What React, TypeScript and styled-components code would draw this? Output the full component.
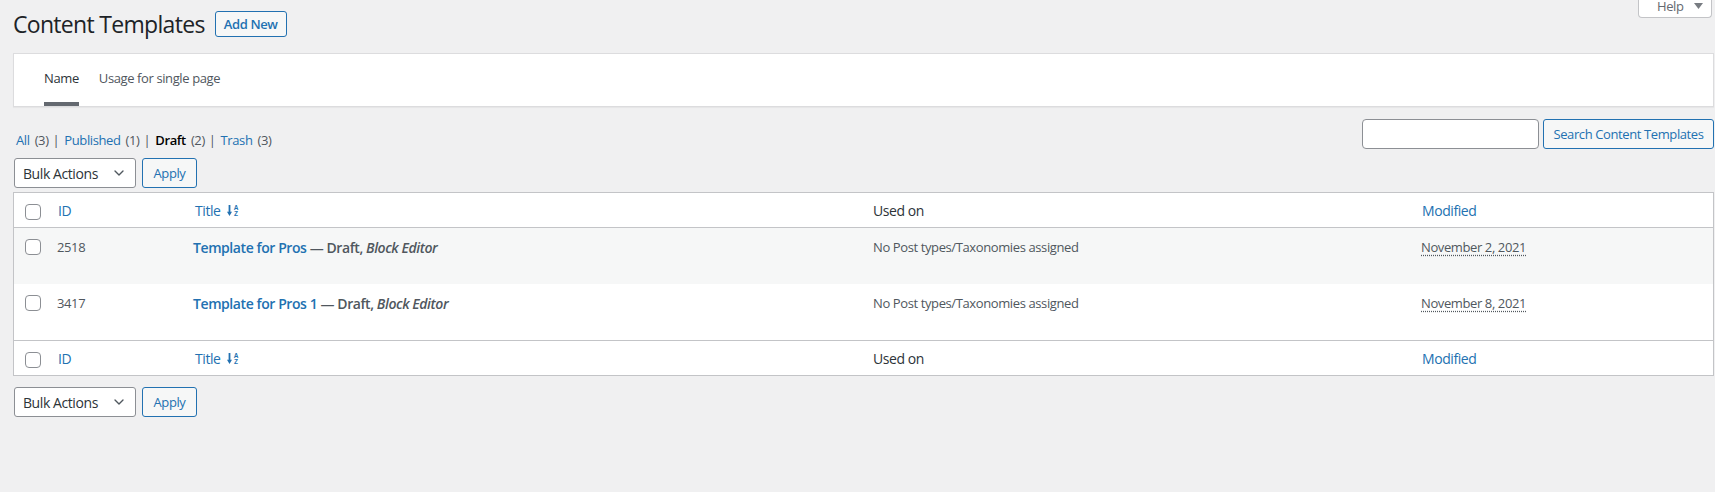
import { createGlobalStyle, styled } from 'styled-components';
import { ChevronDown } from 'lucide-react';

interface TemplateRow {
  id: number;
  title: string;
  usedOn: string;
  modified: string;
}

const rows: TemplateRow[] = [
  { id: 2518, title: 'Template for Pros', usedOn: 'No Post types/Taxonomies assigned', modified: 'November 2, 2021' },
  { id: 3417, title: 'Template for Pros 1', usedOn: 'No Post types/Taxonomies assigned', modified: 'November 8, 2021' },
];

const statuses = [
  { label: 'All', count: 3 },
  { label: 'Published', count: 1 },
  { label: 'Draft', count: 2, current: true },
  { label: 'Trash', count: 3 },
];

const GlobalStyle = createGlobalStyle`
  body {
    margin: 0;
    background: #f0f0f1;
    font-family: "Open Sans", "Noto Sans", sans-serif;
    font-size: 13px;
    color: #3c434a;
  }
  * {
    box-sizing: border-box;
    letter-spacing: -0.03em;
  }
`;

// dashicons-style "sort ascending" glyph: arrow plus a tiny A over Z
const SortIcon = () => (
  <svg width="12" height="13" viewBox="0 0 12 13" aria-hidden="true">
    <rect x="1.6" y="1" width="1.8" height="7.5" fill="currentColor" />
    <path d="M0 7.8 H5 L2.5 12 Z" fill="currentColor" />
    <text x="9" y="5.5" fontSize="6.5" fontWeight="700" textAnchor="middle" fill="currentColor" fontFamily="Liberation Sans, sans-serif">A</text>
    <text x="9" y="12.3" fontSize="6.5" fontWeight="700" textAnchor="middle" fill="currentColor" fontFamily="Liberation Sans, sans-serif">Z</text>
  </svg>
);

const HeaderCells = () => (
  <tr>
    <HeadCheck>
      <Checkbox />
    </HeadCheck>
    <HeadCell>
      <SortLink>ID</SortLink>
    </HeadCell>
    <HeadCell>
      <SortLink>
        Title <SortIcon />
      </SortLink>
    </HeadCell>
    <HeadCell>Used on</HeadCell>
    <HeadCell>
      <SortLink>Modified</SortLink>
    </HeadCell>
  </tr>
);

const BulkActions = () => (
  <BulkRow>
    <SelectBox>
      <span>Bulk Actions</span>
      <ChevronDown size={16} strokeWidth={2} color="#50575e" />
    </SelectBox>
    <ActionButton $width={55}>Apply</ActionButton>
  </BulkRow>
);

const App = () => {
  return (
    <Wrap>
      <GlobalStyle />
      <HeaderRow>
        <PageTitle>Content Templates</PageTitle>
        <ActionButton $width={72} $bold $height={26}>
          Add New
        </ActionButton>
        <HelpTab>
          Help
          <svg width="9" height="6" viewBox="0 0 9 6" aria-hidden="true">
            <path d="M0 0 H9 L4.5 6 Z" fill="#787c82" />
          </svg>
        </HelpTab>
      </HeaderRow>

      <TabsPanel>
        <Tab $active>Name</Tab>
        <Tab>Usage for single page</Tab>
      </TabsPanel>

      <TopRow>
        <StatusList>
          {statuses.map((s, i) => (
            <li key={s.label}>
              <StatusLink $current={s.current}>{s.label}</StatusLink>
              <Count>({s.count})</Count>
              {i < statuses.length - 1 && <Separator>|</Separator>}
            </li>
          ))}
        </StatusList>
        <SearchBox>
          <SearchInput type="search" />
          <ActionButton $width={171}>Search Content Templates</ActionButton>
        </SearchBox>
      </TopRow>

      <BulkActions />

      <Table>
        <colgroup>
          <col style={{ width: 33 }} />
          <col style={{ width: 137 }} />
          <col style={{ width: 679 }} />
          <col style={{ width: 548 }} />
          <col />
        </colgroup>
        <thead>
          <HeaderCells />
        </thead>
        <tbody>
          {rows.map((row, i) => (
            <BodyRow key={row.id} $striped={i % 2 === 0}>
              <RowCheck>
                <Checkbox />
              </RowCheck>
              <Cell>{row.id}</Cell>
              <TitleCell>
                <RowTitle>{row.title}</RowTitle> — Draft, <em>Block Editor</em>
              </TitleCell>
              <Cell>{row.usedOn}</Cell>
              <Cell>
                <DateText>{row.modified}</DateText>
              </Cell>
            </BodyRow>
          ))}
        </tbody>
        <Foot>
          <HeaderCells />
        </Foot>
      </Table>

      <BottomNav>
        <BulkActions />
      </BottomNav>
    </Wrap>
  );
};

const Wrap = styled.div`
  padding: 0 1px 0 13px;
`;

const HeaderRow = styled.div`
  display: flex;
  align-items: center;
  height: 48px;
`;

const PageTitle = styled.h1`
  margin: 0 10px 0 0;
  font-size: 23px;
  font-weight: 400;
  line-height: 30px;
  color: #1d2327;
`;

const ActionButton = styled.button<{ $width: number; $height?: number; $bold?: boolean }>`
  width: ${(p) => p.$width}px;
  height: ${(p) => p.$height ?? 30}px;
  padding: 0;
  border: 1px solid #2271b1;
  border-radius: 3px;
  background: #f6f7f7;
  color: #2271b1;
  font-family: inherit;
  font-size: 13px;
  font-weight: ${(p) => (p.$bold ? 600 : 400)};
  white-space: nowrap;
`;

const HelpTab = styled.div`
  align-self: flex-start;
  display: flex;
  align-items: center;
  gap: 10px;
  width: 74px;
  height: 28px;
  margin: -10px 2px 0 auto;
  padding: 5px 0 0 18px;
  border: 1px solid #c3c4c7;
  border-top: none;
  border-radius: 0 0 4px 4px;
  background: #fff;
  color: #646970;
  font-size: 13px;
`;

const TabsPanel = styled.div`
  display: flex;
  gap: 20px;
  margin-top: 5px;
  padding-left: 30px;
  background: #fff;
  border: 1px solid #dcdcde;
  box-shadow: 0 1px 1px rgba(0, 0, 0, 0.04);
`;

const Tab = styled.div<{ $active?: boolean }>`
  display: flex;
  align-items: center;
  height: 52px;
  border-bottom: 4px solid ${(p) => (p.$active ? '#646970' : 'transparent')};
  color: ${(p) => (p.$active ? '#2c3338' : '#50575e')};
  font-size: 13px;
`;

const TopRow = styled.div`
  display: flex;
  justify-content: space-between;
  align-items: flex-start;
  height: 30px;
  margin-top: 12px;
`;

const StatusList = styled.ul`
  display: flex;
  margin: 0;
  padding: 11px 0 0 3px;
  list-style: none;
  line-height: 20px;
  color: #646970;

  li {
    white-space: nowrap;
  }
`;

const StatusLink = styled.span<{ $current?: boolean }>`
  color: ${(p) => (p.$current ? '#000' : '#2271b1')};
  font-weight: ${(p) => (p.$current ? 600 : 400)};
`;

const Count = styled.span`
  margin-left: 5px;
  color: #50575e;
`;

const Separator = styled.span`
  margin: 0 5px 0 4px;
  color: #50575e;
`;

const SearchBox = styled.div`
  display: flex;
  gap: 4px;
`;

const SearchInput = styled.input`
  width: 177px;
  height: 30px;
  border: 1px solid #8c8f94;
  border-radius: 4px;
  background: #fff;
  outline: none;
`;

const BulkRow = styled.div`
  display: flex;
  gap: 6px;
  margin-top: 9px;
  padding-left: 1px;
`;

const SelectBox = styled.div`
  display: flex;
  align-items: center;
  justify-content: space-between;
  width: 122px;
  height: 30px;
  padding: 0 8px 0 8px;
  border: 1px solid #8c8f94;
  border-radius: 3px;
  background: #fff;
  color: #2c3338;
  font-size: 14px;
`;

const Table = styled.table`
  width: 100%;
  margin-top: 4px;
  border: 1px solid #c3c4c7;
  border-spacing: 0;
  background: #fff;
  table-layout: fixed;
`;

const HeadCell = styled.th`
  height: 35px;
  padding: 0 10px;
  border-bottom: 1px solid #c3c4c7;
  text-align: left;
  font-size: 14px;
  font-weight: 400;
  color: #2c3338;
  vertical-align: middle;
`;

const HeadCheck = styled(HeadCell)`
  padding: 3px 0 0 11px;
`;

const Foot = styled.tfoot`
  th {
    border-bottom: none;
    border-top: 1px solid #c3c4c7;
  }
`;

const SortLink = styled.span`
  display: inline-flex;
  align-items: center;
  gap: 6px;
  padding-left: 1px;
  color: #2271b1;
`;

const BodyRow = styled.tr<{ $striped: boolean }>`
  height: 56px;
  background: ${(p) => (p.$striped ? '#f6f7f7' : '#fff')};
`;

const Cell = styled.td`
  padding: 9px 10px 8px;
  vertical-align: top;
  font-size: 13px;
  line-height: 21px;
  color: #50575e;
`;

const RowCheck = styled(Cell)`
  padding: 11px 0 0 11px;
`;

const TitleCell = styled(Cell)`
  padding-left: 9px;
  font-size: 14px;
  font-weight: 600;
  white-space: nowrap;
`;

const RowTitle = styled.span`
  color: #2271b1;
`;

const DateText = styled.abbr`
  text-decoration: underline dotted;
  text-underline-offset: 3px;
`;

const Checkbox = styled.span`
  display: block;
  width: 16px;
  height: 16px;
  border: 1px solid #8c8f94;
  border-radius: 4px;
  background: #fff;
`;

const BottomNav = styled.div`
  margin-top: 11px;
  & > div {
    margin-top: 0;
  }
`;

export default App;
